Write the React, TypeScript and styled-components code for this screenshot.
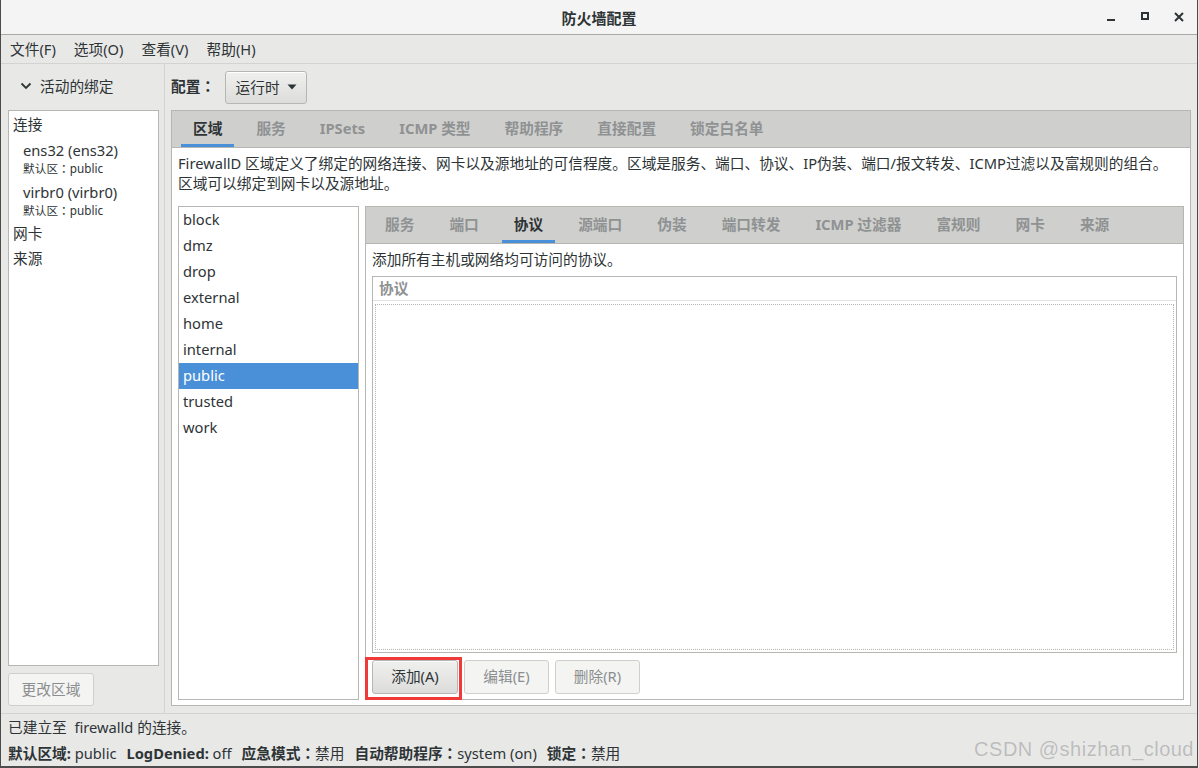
import React from "react";
import styled, { createGlobalStyle } from "styled-components";

const GlobalStyle = createGlobalStyle`
  html, body {
    margin: 0;
    padding: 0;
    background: #e8e8e7;
  }
  body {
    font-family: "Noto Sans", "Noto Sans CJK SC", sans-serif;
    font-size: 14.7px;
    color: #2e3436;
  }
  * {
    box-sizing: border-box;
  }
`;

const zoneTabs = ["区域", "服务", "IPSets", "ICMP 类型", "帮助程序", "直接配置", "锁定白名单"];
const detailTabs = ["服务", "端口", "协议", "源端口", "伪装", "端口转发", "ICMP 过滤器", "富规则", "网卡", "来源"];
const zones = ["block", "dmz", "drop", "external", "home", "internal", "public", "trusted", "work"];

export default function App() {
  return (
    <>
      <GlobalStyle />
      <Window>
        <TitleBar>
          <Title>防火墙配置</Title>
          <WindowControls>
            <ControlButton>
              <svg width="10" height="10" viewBox="0 0 10 10">
                <rect x="1" y="7" width="8" height="2" fill="#2e3436" />
              </svg>
            </ControlButton>
            <ControlButton>
              <svg width="10" height="10" viewBox="0 0 10 10">
                <rect x="2" y="1" width="6" height="6" fill="none" stroke="#2e3436" strokeWidth="2" />
              </svg>
            </ControlButton>
            <ControlButton>
              <svg width="10" height="10" viewBox="0 0 10 10">
                <path d="M1 1 L9 9 M9 1 L1 9" stroke="#2e3436" strokeWidth="2" />
              </svg>
            </ControlButton>
          </WindowControls>
        </TitleBar>

        <MenuBar>
          <MenuItem>文件(F)</MenuItem>
          <MenuItem>选项(O)</MenuItem>
          <MenuItem>查看(V)</MenuItem>
          <MenuItem>帮助(H)</MenuItem>
        </MenuBar>

        <Main>
          <LeftPanel>
            <Expander>
              <svg width="12" height="8" viewBox="0 0 12 8">
                <path d="M1.5 1.5 L6 6 L10.5 1.5" fill="none" stroke="#2e3436" strokeWidth="1.8" />
              </svg>
              活动的绑定
            </Expander>
            <BindingList>
              <Category>连接</Category>
              <Binding>
                <BindingName>ens32 (ens32)</BindingName>
                <BindingZone>
                  默认区<Colon>：</Colon>public
                </BindingZone>
              </Binding>
              <Binding>
                <BindingName>virbr0 (virbr0)</BindingName>
                <BindingZone>
                  默认区<Colon>：</Colon>public
                </BindingZone>
              </Binding>
              <Category>网卡</Category>
              <Category>来源</Category>
            </BindingList>
            <Button $disabled $width={86} $height={33}>
              更改区域
            </Button>
          </LeftPanel>

          <RightPanel>
            <ConfigRow>
              <ConfigLabel>
                配置<Colon>：</Colon>
              </ConfigLabel>
              <Button $width={82} $height={33}>
                运行时
                <svg width="10" height="6" viewBox="0 0 10 6">
                  <path d="M0.5 0.5 L9.5 0.5 L5 5.5 Z" fill="#2e3436" />
                </svg>
              </Button>
            </ConfigRow>

            <Notebook>
              <TabBar $lead={9} $gap={10}>
                {zoneTabs.map((t) => (
                  <Tab key={t} $active={t === "区域"}>
                    {t}
                  </Tab>
                ))}
              </TabBar>
              <ZonePage>
                <Description>
                  FirewallD 区域定义了绑定的网络连接、网卡以及源地址的可信程度。区域是服务、端口、协议、IP伪装、端口/报文转发、ICMP过滤以及富规则的组合。
                  <br />
                  区域可以绑定到网卡以及源地址。
                </Description>
                <ZoneRow>
                  <ZoneList>
                    {zones.map((z) => (
                      <ZoneItem key={z} $selected={z === "public"}>
                        {z}
                      </ZoneItem>
                    ))}
                  </ZoneList>

                  <InnerNotebook>
                    <TabBar $lead={7} $gap={11}>
                      {detailTabs.map((t) => (
                        <Tab key={t} $active={t === "协议"}>
                          {t}
                        </Tab>
                      ))}
                    </TabBar>
                    <ProtocolPage>
                      <PageText>添加所有主机或网络均可访问的协议。</PageText>
                      <Table>
                        <TableHeader>协议</TableHeader>
                        <TableBody />
                      </Table>
                      <ButtonRow>
                        <Highlight>
                          <Button $width={86} $height={34}>
                            添加(A)
                          </Button>
                        </Highlight>
                        <Button $disabled $width={85} $height={34}>
                          编辑(E)
                        </Button>
                        <Button $disabled $width={85} $height={34}>
                          删除(R)
                        </Button>
                      </ButtonRow>
                    </ProtocolPage>
                  </InnerNotebook>
                </ZoneRow>
              </ZonePage>
            </Notebook>
          </RightPanel>
        </Main>

        <StatusBar>
          <StatusLine>已建立至&nbsp; firewalld 的连接。</StatusLine>
          <StatusLine>
            <StatusItem>
              <b>默认区域:</b> public
            </StatusItem>
            <StatusItem>
              <b>LogDenied:</b> off
            </StatusItem>
            <StatusItem>
              <b>
                应急模式<Colon>：</Colon>
              </b>
              禁用
            </StatusItem>
            <StatusItem>
              <b>
                自动帮助程序<Colon>：</Colon>
              </b>
              system (on)
            </StatusItem>
            <StatusItem>
              <b>
                锁定<Colon>：</Colon>
              </b>
              禁用
            </StatusItem>
          </StatusLine>
          <Watermark>CSDN @shizhan_cloud</Watermark>
        </StatusBar>
      </Window>
    </>
  );
}

const Window = styled.div`
  position: relative;
  width: 1198px;
  height: 768px;
  display: flex;
  flex-direction: column;
  background: #e8e8e7;
  border-left: 1px solid #4c4c4c;
  border-right: 1px solid #4c4c4c;
  border-bottom: 2px solid #4c4c4c;
  overflow: hidden;
`;

const TitleBar = styled.div`
  position: relative;
  height: 35px;
  flex: none;
  display: flex;
  align-items: center;
  justify-content: center;
  background: #f4f4f4;
  border-bottom: 1px solid #a9a9a7;
`;

const Title = styled.div`
  font-weight: bold;
  font-size: 15px;
  color: #2e3436;
`;

const WindowControls = styled.div`
  position: absolute;
  right: 8px;
  top: 0;
  height: 34px;
  display: flex;
  align-items: center;
  gap: 14px;
`;

const ControlButton = styled.div`
  width: 20px;
  height: 20px;
  display: flex;
  align-items: center;
  justify-content: center;
`;

const Colon = styled.span`
  font-family: "Noto Sans CJK JP", "Noto Sans CJK SC", sans-serif;
`;

const MenuBar = styled.div`
  height: 29px;
  flex: none;
  display: flex;
  align-items: center;
  border-bottom: 1px solid #d3d3d1;
`;

const MenuItem = styled.div`
  padding: 0 9px;
  line-height: 28px;
`;

const Main = styled.div`
  flex: 1;
  display: flex;
  min-height: 0;
`;

const LeftPanel = styled.div`
  width: 164px;
  flex: none;
  display: flex;
  flex-direction: column;
  padding: 0 5px 7px 7px;
  border-right: 1px solid #d3d3d1;
`;

const Expander = styled.div`
  height: 46px;
  flex: none;
  display: flex;
  align-items: center;
  gap: 8px;
  padding: 0 0 3px 12px;
`;

const BindingList = styled.div`
  flex: 1;
  margin-bottom: 7px;
  padding-top: 1px;
  background: #ffffff;
  border: 1px solid #b6b6b3;
`;

const Category = styled.div`
  height: 25px;
  line-height: 25px;
  padding-left: 4px;
`;

const Binding = styled.div`
  padding: 3px 0 3px 14px;
`;

const BindingName = styled.div`
  line-height: 20px;
`;

const BindingZone = styled.div`
  font-size: 11.7px;
  line-height: 16px;
`;

const RightPanel = styled.div`
  flex: 1;
  display: flex;
  flex-direction: column;
  padding: 7px 6px 7px 6px;
  min-width: 0;
`;

const ConfigRow = styled.div`
  display: flex;
  align-items: center;
  gap: 10px;
  height: 33px;
  margin-bottom: 6px;
  flex: none;
`;

const ConfigLabel = styled.div`
  font-weight: bold;
  padding-bottom: 4px;
`;

const Button = styled.div<{ $disabled?: boolean; $width: number; $height: number }>`
  width: ${(p) => p.$width}px;
  height: ${(p) => p.$height}px;
  flex: none;
  display: flex;
  align-items: center;
  justify-content: center;
  gap: 7px;
  padding-bottom: 3px;
  border-radius: 3px;
  border: 1px solid ${(p) => (p.$disabled ? "#d1cfcc" : "#b6b6b3")};
  background: ${(p) =>
    p.$disabled ? "#f4f4f3" : "linear-gradient(to bottom, #f0f0ef, #dcdcda)"};
  color: ${(p) => (p.$disabled ? "#8b8e8f" : "#2e3436")};
  box-shadow: ${(p) => (p.$disabled ? "none" : "inset 0 1px #ffffff")};

  svg {
    margin-top: 2px;
  }
`;

const Notebook = styled.div`
  flex: 1;
  display: flex;
  flex-direction: column;
  background: #ffffff;
  border: 1px solid #b6b6b3;
  min-height: 0;
`;

const TabBar = styled.div<{ $lead: number; $gap: number }>`
  height: 37px;
  flex: none;
  display: flex;
  gap: ${(p) => p.$gap}px;
  padding-left: ${(p) => p.$lead}px;
  background: #cfcfcd;
  border-bottom: 1px solid #b6b6b3;
`;

const Tab = styled.div<{ $active?: boolean }>`
  padding: 0 12px;
  height: 36px;
  line-height: 35px;
  font-weight: bold;
  white-space: nowrap;
  color: ${(p) => (p.$active ? "#2e3436" : "#8f9293")};
  box-shadow: ${(p) => (p.$active ? "inset 0 -3px #4a90d9" : "none")};
`;

const ZonePage = styled.div`
  flex: 1;
  display: flex;
  flex-direction: column;
  padding: 5px 6px 5px 6px;
  min-height: 0;
`;

const Description = styled.div`
  line-height: 20px;
  white-space: nowrap;
  margin-bottom: 13px;
`;

const ZoneRow = styled.div`
  flex: 1;
  display: flex;
  gap: 6px;
  min-height: 0;
`;

const ZoneList = styled.div`
  width: 181px;
  flex: none;
  background: #ffffff;
  border: 1px solid #b6b6b3;
`;

const ZoneItem = styled.div<{ $selected?: boolean }>`
  height: 26px;
  line-height: 25px;
  padding-left: 4px;
  background: ${(p) => (p.$selected ? "#4a90d9" : "transparent")};
  color: ${(p) => (p.$selected ? "#ffffff" : "#2e3436")};
`;

const InnerNotebook = styled.div`
  flex: 1;
  display: flex;
  flex-direction: column;
  border: 1px solid #b6b6b3;
  min-width: 0;
`;

const ProtocolPage = styled.div`
  flex: 1;
  display: flex;
  flex-direction: column;
  padding: 5px 6px 5px 6px;
  min-height: 0;
`;

const PageText = styled.div`
  line-height: 20px;
  margin-bottom: 7px;
`;

const Table = styled.div`
  flex: 1;
  display: flex;
  flex-direction: column;
  border: 1px solid #b6b6b3;
  background: #ffffff;
`;

const TableHeader = styled.div`
  height: 24px;
  line-height: 23px;
  padding-left: 6px;
  font-weight: bold;
  color: #8f9293;
  border-bottom: 1px solid #e3e3e1;
`;

const TableBody = styled.div`
  flex: 1;
  margin: 3px 2px 2px 2px;
  border: 1px dotted #b6b6b3;
`;

const ButtonRow = styled.div`
  display: flex;
  gap: 6px;
  margin-top: 7px;
  flex: none;
`;

const Highlight = styled.div`
  position: relative;

  &::after {
    content: "";
    position: absolute;
    left: -7px;
    right: -4px;
    top: -3px;
    bottom: -6px;
    border: 3px solid #f03a3a;
    pointer-events: none;
  }
`;

const StatusBar = styled.div`
  position: relative;
  height: 53px;
  flex: none;
  padding: 3px 8px 3px 7px;
  border-top: 1px solid #d3d3d1;
  display: flex;
  flex-direction: column;
  gap: 6px;
`;

const StatusLine = styled.div`
  display: flex;
  gap: 10px;
  line-height: 20px;
  white-space: nowrap;
`;

const StatusItem = styled.span`
  b {
    font-weight: bold;
  }
`;

const Watermark = styled.div`
  position: absolute;
  right: 3px;
  bottom: 6px;
  font-family: "Liberation Sans", Arial, sans-serif;
  font-size: 20px;
  line-height: 22px;
  letter-spacing: 0.5px;
  color: #bcbcbc;
  text-shadow: 0 0 1px rgba(255, 255, 255, 0.6);
`;
